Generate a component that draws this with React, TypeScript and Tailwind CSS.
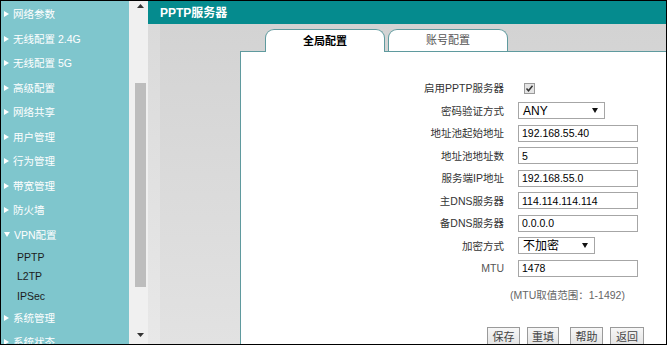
import React from "react";

const Tri = ({ down = false }: { down?: boolean }) =>
  down ? (
    <svg width="6" height="5" viewBox="0 0 6 5" className="shrink-0">
      <path d="M0 0 L6 0 L3 5 Z" fill="#ffffff" />
    </svg>
  ) : (
    <svg width="5" height="6" viewBox="0 0 5 6" className="shrink-0">
      <path d="M0 0 L5 3 L0 6 Z" fill="#ffffff" />
    </svg>
  );

const mainItems1 = ["网络参数", "无线配置 2.4G", "无线配置 5G", "高级配置", "网络共享", "用户管理", "行为管理", "带宽管理", "防火墙"];

function MainItem({ label, down = false }: { label: string; down?: boolean }) {
  return (
    <div className="h-[24.5px] shrink-0 flex items-center pl-[3px] gap-[4px] text-white text-[10.5px] leading-none whitespace-nowrap">
      <Tri down={down} />
      <span>{label}</span>
    </div>
  );
}

function SubItem({ label }: { label: string }) {
  return (
    <div className="h-[19.5px] shrink-0 flex items-center pl-[16px] text-[#1c1c1c] text-[10.5px] leading-none">{label}</div>
  );
}

function Arrow({ down = false }: { down?: boolean }) {
  return (
    <svg width="7" height="4" viewBox="0 0 7 4">
      <path d={down ? "M0 0 L7 0 L3.5 4 Z" : "M0 4 L7 4 L3.5 0 Z"} fill="#333" />
    </svg>
  );
}

function Row({ label, children, gray = false }: { label: string; children: React.ReactNode; gray?: boolean }) {
  return (
    <div className="h-[22.5px] shrink-0 flex items-center">
      <div className={`w-[263px] text-right text-[10.5px] leading-none ${gray ? "text-[#555]" : "text-[#333]"}`}>{label}</div>
      <div className="ml-[14px] flex items-center">{children}</div>
    </div>
  );
}

function TextInput({ value }: { value: string }) {
  return (
    <div className="w-[120px] h-[17px] border border-[#a6a6a6] bg-white flex items-center pl-[3px] text-[10.5px] text-black leading-none">
      {value}
    </div>
  );
}

function SelectBox({ value, w }: { value: string; w: string }) {
  return (
    <div className={`${w} h-[17px] border border-[#a6a6a6] bg-white flex items-center justify-between pl-[4px] pr-[6px] text-[12px] text-black leading-none`}>
      <span>{value}</span>
      <svg width="6" height="5" viewBox="0 0 6 5">
        <path d="M0 0 L6 0 L3 5 Z" fill="#111" />
      </svg>
    </div>
  );
}

function Btn({ label, w, ml }: { label: string; w: string; ml: string }) {
  return (
    <div className={`${w} ${ml} shrink-0 h-[20px] border border-[#9a9a9a] bg-gradient-to-b from-[#f7f7f7] to-[#e2e2e2] flex items-center justify-center text-[11px] text-[#444] leading-none`}>
      {label}
    </div>
  );
}

export default function App() {
  return (
    <div className="w-[667px] h-[345px] border border-black flex overflow-hidden bg-white font-['Liberation_Sans','Noto_Sans_CJK_SC',sans-serif]">
      {/* sidebar */}
      <div className="w-[128px] shrink-0 bg-[#7fc6cd] flex flex-col pt-[1px] overflow-hidden">
        {mainItems1.map((l) => (
          <MainItem key={l} label={l} />
        ))}
        <MainItem label="VPN配置" down />
        <SubItem label="PPTP" />
        <SubItem label="L2TP" />
        <SubItem label="IPSec" />
        <MainItem label="系统管理" />
        <MainItem label="系统状态" />
      </div>
      {/* scrollbar */}
      <div className="w-[19px] shrink-0 bg-[#f0f0f0] flex flex-col items-center pl-[4px]">
        <div className="h-[10px] shrink-0 flex items-center">
          <Arrow />
        </div>
        <div className="mt-[72px] shrink-0 w-[11px] h-[204px] bg-[#bdbdbd]" />
        <div className="flex-1" />
        <div className="h-[10px] shrink-0 mb-[4px] flex items-center">
          <Arrow down />
        </div>
      </div>
      {/* main */}
      <div className="flex-1 flex flex-col min-w-0">
        <div className="h-[23px] shrink-0 bg-[#058b8e] flex items-center pl-[12px] text-white text-[12px] font-bold leading-none">
          PPTP服务器
        </div>
        <div className="flex-1 flex min-h-0">
          <div className="w-[12px] shrink-0 bg-gradient-to-b from-[#dadada] to-[#e8e8e8]" />
          <div className="flex-1 flex flex-col bg-gradient-to-b from-[#d3d3d3] to-[#e2e2e2] min-w-0">
            <div className="h-[28px] shrink-0 flex">
              <div className="w-[80px] shrink-0" />
              <div className="flex-1 border-b border-[#5f9a9e] flex items-end pl-[25px] gap-[3px]">
                <div className="w-[120px] h-[23px] mb-[-1px] bg-white border border-b-0 border-[#5f9a9e] rounded-t-[9px] flex items-center justify-center text-[11px] font-bold text-black leading-none">
                  全局配置
                </div>
                <div className="w-[120px] h-[22px] bg-white border border-b-0 border-[#5f9a9e] rounded-t-[9px] flex items-center justify-center text-[11px] text-[#555] leading-none">
                  账号配置
                </div>
              </div>
            </div>
            <div className="flex-1 flex min-h-0">
              <div className="w-[80px] shrink-0" />
              <div className="flex-1 bg-white border-l border-[#5f9a9e] overflow-hidden pt-[25px] flex flex-col">
                <Row label="启用PPTP服务器">
                  <div className="ml-[6px]">
                    <svg width="11" height="11" viewBox="0 0 11 11">
                      <rect x="0.5" y="0.5" width="10" height="10" fill="#e4e4e4" stroke="#9a9a9a" />
                      <path d="M2.5 5.5 L4.5 7.8 L8.5 2.8" stroke="#333" strokeWidth="1.5" fill="none" />
                    </svg>
                  </div>
                </Row>
                <Row label="密码验证方式">
                  <SelectBox value="ANY" w="w-[87px]" />
                </Row>
                <Row label="地址池起始地址">
                  <TextInput value="192.168.55.40" />
                </Row>
                <Row label="地址池地址数">
                  <TextInput value="5" />
                </Row>
                <Row label="服务端IP地址">
                  <TextInput value="192.168.55.0" />
                </Row>
                <Row label="主DNS服务器">
                  <TextInput value="114.114.114.114" />
                </Row>
                <Row label="备DNS服务器">
                  <TextInput value="0.0.0.0" />
                </Row>
                <Row label="加密方式">
                  <SelectBox value="不加密" w="w-[77px]" />
                </Row>
                <Row label="MTU" gray>
                  <TextInput value="1478" />
                </Row>
                <div className="h-[22px] shrink-0 mt-[4.5px] flex items-center pl-[269px] text-[10.5px] text-[#666] leading-none whitespace-nowrap">
                  (MTU取值范围：1-1492)
                </div>
                <div className="mt-[21px] shrink-0 flex pl-[246px]">
                  <Btn label="保存" w="w-[33px]" ml="ml-0" />
                  <Btn label="重填" w="w-[32px]" ml="ml-[7px]" />
                  <Btn label="帮助" w="w-[33px]" ml="ml-[11px]" />
                  <Btn label="返回" w="w-[34px]" ml="ml-[7px]" />
                </div>
              </div>
            </div>
          </div>
        </div>
      </div>
    </div>
  );
}
